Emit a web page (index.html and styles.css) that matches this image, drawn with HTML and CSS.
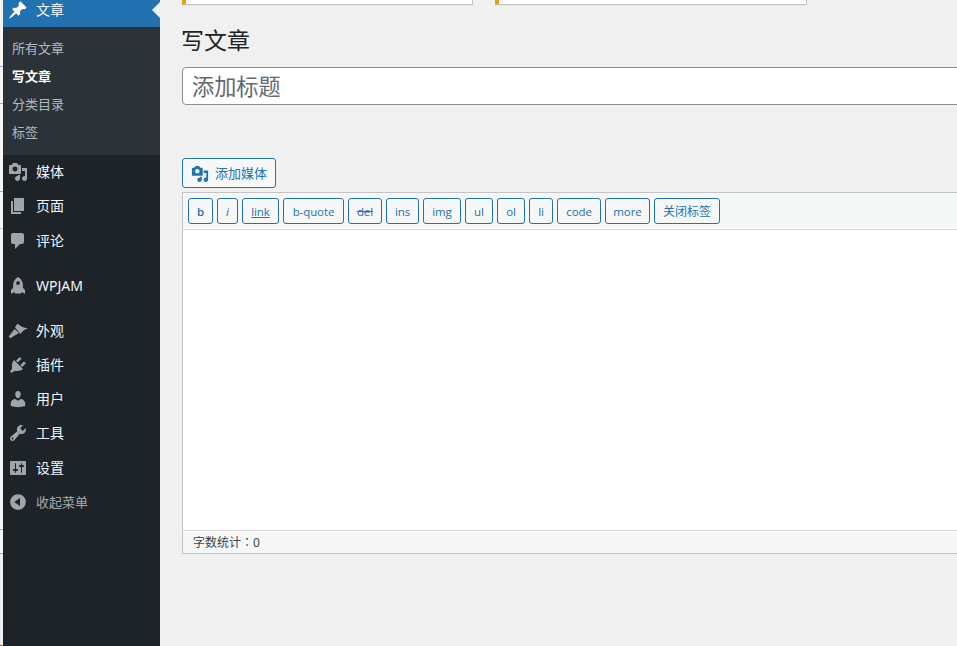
FILE: index.html
```html
<!DOCTYPE html>
<html lang="zh-CN">
<head>
<meta charset="utf-8">
<title>写文章</title>
<link rel="stylesheet" href="styles.css">
</head>
<body>
<div class="sliver">
  <div class="seg seg-a"></div>
  <div class="seg seg-b"></div>
  <div class="seg seg-c"></div>
  <div class="seg seg-d"></div>
  <div class="seg seg-e"></div>
  <div class="seg seg-f"></div>
  <div class="seg seg-g"></div>
  <div class="seg seg-h"></div>
</div>
<nav class="sidebar">
  <a class="item current">
    <svg class="ico" viewBox="0 0 20 20"><path d="M10.44 3.02l1.82-1.82 6.36 6.35-1.83 1.82c-1.05-.68-2.48-.57-3.41.36l-.75.75c-.92.93-1.04 2.35-.35 3.41l-1.83 1.82-2.41-2.41-2.8 2.79c-.42.42-3.38 2.71-3.8 2.29s1.86-3.39 2.28-3.81l2.79-2.79L4.1 9.36l1.83-1.82c1.05.69 2.48.57 3.4-.36l.75-.75c.93-.92 1.05-2.35.36-3.41z"/></svg>
    <span>文章</span>
    <i class="arrow"></i>
  </a>
  <ul class="submenu">
    <li>所有文章</li>
    <li class="on">写文章</li>
    <li>分类目录</li>
    <li>标签</li>
  </ul>
  <a class="item">
    <svg class="ico" viewBox="0 0 20 20"><path d="M13 11V4c0-.55-.45-1-1-1h-1.67L9 1H5L3.67 3H2c-.55 0-1 .45-1 1v7c0 .55.45 1 1 1h10c.55 0 1-.45 1-1zM7 4.5c1.38 0 2.5 1.12 2.5 2.5S8.38 9.5 7 9.5 4.5 8.38 4.5 7 5.62 4.5 7 4.5zM14 6h5v10.5c0 1.38-1.12 2.5-2.5 2.5S14 17.88 14 16.5s1.12-2.5 2.5-2.5c.17 0 .34.02.5.05V9h-3V6zm-4 8.05V13h2v3.5c0 1.38-1.12 2.5-2.5 2.5S7 17.88 7 16.5 8.12 14 9.5 14c.17 0 .34.02.5.05z"/></svg>
    <span>媒体</span>
  </a>
  <a class="item tall">
    <svg class="ico" viewBox="0 0 20 20"><path d="M6 15V2h10v13H6zm-1 1h8v2H3V5h2v11z"/></svg>
    <span>页面</span>
  </a>
  <a class="item">
    <svg class="ico" viewBox="0 0 20 20"><path d="M5 2h9c1.1 0 2 .9 2 2v7c0 1.1-.9 2-2 2h-2l-5 5v-5H5c-1.1 0-2-.9-2-2V4c0-1.1.9-2 2-2z"/></svg>
    <span>评论</span>
  </a>
  <a class="item spaced">
    <svg class="ico" viewBox="0 0 20 20"><path fill-rule="evenodd" d="M10 1c3 1.8 5 4.8 5 8.2 0 .8-.1 1.5-.3 2.2l2.3 2.6V18l-3.2-2-.8 1.5H7L6.2 16 3 18v-4l2.3-2.6c-.2-.7-.3-1.4-.3-2.2C5 5.8 7 2.8 10 1zM10 5.2a1.9 1.9 0 100 3.8 1.9 1.9 0 000-3.8z"/></svg>
    <span>WPJAM</span>
  </a>
  <a class="item spaced">
    <svg class="ico" viewBox="0 0 20 20"><path d="M7 6.5l2.5-4C12 5 15.5 7 20 7.3c-3.5 1.2-6 3.2-7.5 5.7z"/><path d="M6.5 8l4.5 4-8.8 5.2-1.5-1.6z"/></svg>
    <span>外观</span>
  </a>
  <a class="item">
    <svg class="ico" viewBox="0 0 20 20"><path d="M13.11 4.36L9.87 7.6 8 5.73l3.24-3.24c.35-.34 1.05-.2 1.56.32.52.51.66 1.21.31 1.55zm-8 1.77l.91-1.12 9.01 9.01-1.19.84c-.71.71-2.63 1.16-3.82 1.16H6.14L4.9 17.26c-.59.59-1.54.59-2.12 0-.59-.58-.59-1.53 0-2.12l1.24-1.24v-3.88c0-1.13.4-3.19 1.09-3.89zm7.26 3.97l3.24-3.24c.34-.35 1.04-.21 1.55.31.52.51.66 1.21.31 1.55l-3.24 3.25z"/></svg>
    <span>插件</span>
  </a>
  <a class="item">
    <svg class="ico" viewBox="0 0 20 20"><path d="M10 9.25c-2.27 0-2.73-3.44-2.73-3.44C7 4.02 7.82 2 9.97 2c2.16 0 2.98 2.02 2.71 3.81 0 0-.41 3.44-2.68 3.44zm0 2.57L12.72 10c2.39 0 4.52 2.33 4.52 4.53v2.49s-3.65 1.13-7.24 1.13c-3.65 0-7.24-1.13-7.24-1.13v-2.49c0-2.25 1.94-4.48 4.47-4.48z"/></svg>
    <span>用户</span>
  </a>
  <a class="item tall">
    <svg class="ico" viewBox="0 0 20 20"><path d="M16.68 9.77c-1.34 1.34-3.3 1.67-4.95.99l-5.41 6.52c-.99.99-2.59.99-3.58 0s-.99-2.59 0-3.57l6.52-5.42c-.68-1.65-.35-3.61.99-4.95 1.28-1.28 3.12-1.62 4.72-1.06l-2.89 2.89 2.82 2.82 2.86-2.87c.53 1.58.18 3.39-1.08 4.65zM3.81 16.21c.4.39 1.04.39 1.43 0 .4-.4.4-1.04 0-1.43-.39-.4-1.03-.4-1.43 0-.39.39-.39 1.03 0 1.43z"/></svg>
    <span>工具</span>
  </a>
  <a class="item">
    <svg class="ico" viewBox="0 0 20 20"><path d="M18 16V4c0-.55-.45-1-1-1H3c-.55 0-1 .45-1 1v12c0 .55.45 1 1 1h14c.55 0 1-.45 1-1zM8 11h1c.55 0 1 .45 1 1s-.45 1-1 1H8v1.5c0 .28-.22.5-.5.5s-.5-.22-.5-.5V13H6c-.55 0-1-.45-1-1s.45-1 1-1h1V5.5c0-.28.22-.5.5-.5s.5.22.5.5V11zm5-2h-1c-.55 0-1-.45-1-1s.45-1 1-1h1V5.5c0-.28.22-.5.5-.5s.5.22.5.5V7h1c.55 0 1 .45 1 1s-.45 1-1 1h-1v5.5c0 .28-.22.5-.5.5s-.5-.22-.5-.5V9z"/></svg>
    <span>设置</span>
  </a>
  <a class="item collapse">
    <svg class="ico" viewBox="0 0 20 20"><path d="M10 2.16c4.33 0 7.84 3.51 7.84 7.84s-3.51 7.84-7.84 7.84S2.16 14.33 2.16 10 5.71 2.16 10 2.16zm2 11.72V6.12L6.18 9.97z"/></svg>
    <span>收起菜单</span>
  </a>
</nav>
<main class="content">
  <div class="notices">
    <div class="notice notice-one"></div>
    <div class="notice notice-two"></div>
  </div>
  <h1 class="title">写文章</h1>
  <div class="title-input">添加标题</div>
  <button class="media-btn">
    <svg class="media-ico" viewBox="0 0 20 20"><path d="M13 11V4c0-.55-.45-1-1-1h-1.67L9 1H5L3.67 3H2c-.55 0-1 .45-1 1v7c0 .55.45 1 1 1h10c.55 0 1-.45 1-1zM7 4.5c1.38 0 2.5 1.12 2.5 2.5S8.38 9.5 7 9.5 4.5 8.38 4.5 7 5.62 4.5 7 4.5zM14 6h5v10.5c0 1.38-1.12 2.5-2.5 2.5S14 17.88 14 16.5s1.12-2.5 2.5-2.5c.17 0 .34.02.5.05V9h-3V6zm-4 8.05V13h2v3.5c0 1.38-1.12 2.5-2.5 2.5S7 17.88 7 16.5 8.12 14 9.5 14c.17 0 .34.02.5.05z"/></svg>
    <span class="media-label">添加媒体</span>
  </button>
  <section class="editor">
    <div class="toolbar">
      <button class="tag tag-b">b</button>
      <button class="tag tag-i">i</button>
      <button class="tag tag-link">link</button>
      <button class="tag tag-quote">b-quote</button>
      <button class="tag tag-del">del</button>
      <button class="tag tag-ins">ins</button>
      <button class="tag tag-img">img</button>
      <button class="tag tag-ul">ul</button>
      <button class="tag tag-ol">ol</button>
      <button class="tag tag-li">li</button>
      <button class="tag tag-code">code</button>
      <button class="tag tag-more">more</button>
      <button class="tag tag-close">关闭标签</button>
    </div>
    <div class="textarea"></div>
    <div class="status">字数统计<span class="colon" lang="zh-TW">：</span>0</div>
  </section>
</main>
</body>
</html>
```
FILE: styles.css
```css
* { box-sizing: border-box; }
html, body { height: 100%; }
body {
  margin: 0;
  display: flex;
  height: 646px;
  overflow: hidden;
  background: #f0f0f1;
  font-family: "Noto Sans", "Noto Sans CJK SC", sans-serif;
  font-size: 13px;
  color: #3c434a;
}
.sliver { width: 3px; flex: none; display: flex; flex-direction: column; background: #f6f6f6; }
.seg { flex: none; border-bottom: 1px solid #a7aaad; }
.seg-a { height: 67px; }
.seg-b { height: 37px; }
.seg-c { height: 88px; }
.seg-d { height: 37px; border-bottom-color: #c3c4c7; }
.seg-e { height: 301px; }
.seg-f { height: 24px; }
.seg-g { flex: 1; border: 0; background: #f0f0f1; }
.seg-h {
  height: 1px;
  border: 0;
  background: linear-gradient(90deg, #d63638 0 1px, #2271b1 1px 2px, #dba617 2px 3px);
}
.sidebar {
  width: 157px;
  flex: none;
  background: #1d2327;
  display: flex;
  flex-direction: column;
}
.item {
  display: flex;
  align-items: center;
  height: 34px;
  padding-left: 5px;
  color: #f0f6fc;
  font-size: 14px;
  position: relative;
}
.tall { height: 35px; padding-bottom: 1px; }
.item span { margin: -2px 0 0 8px; }
.ico { width: 20px; height: 20px; flex: none; fill: #a0a5aa; }
.current {
  height: 27px;
  background: #2271b1;
  color: #fff;
  padding-bottom: 8px;
}
.current .ico { fill: #fff; }
.arrow {
  position: absolute;
  right: 0;
  top: 2px;
  border: 8px solid transparent;
  border-right-color: #f0f0f1;
  border-left-width: 0;
}
.spaced { margin-top: 11px; }
.collapse { color: #a7aaad; font-size: 13px; }
.submenu {
  list-style: none;
  margin: 0;
  padding: 7px 0 9px;
  background: #2c3338;
  color: rgba(240, 246, 252, .7);
}
.submenu li { height: 28px; line-height: 28px; padding-left: 9px; }
.submenu .on { color: #fff; font-weight: 600; }
.content { flex: 1; min-width: 0; padding-left: 22px; overflow: hidden; }
.notices { display: flex; gap: 22px; height: 5px; }
.notice {
  background: #fff;
  border-left: 4px solid #dba617;
  border-bottom: 1px solid #c3c4c7;
  border-right: 1px solid #c3c4c7;
  box-shadow: 0 1px 1px rgba(0, 0, 0, .04);
}
.notice-one { width: 291px; }
.notice-two { width: 312px; }
.title {
  margin: 20px 0 0 -1px;
  height: 30px;
  line-height: 30px;
  font-size: 23px;
  font-weight: 400;
  color: #1d2327;
}
.title-input {
  width: 900px;
  height: 38px;
  margin-top: 12px;
  padding-left: 9px;
  line-height: 38px;
  font-size: 22.2px;
  color: #646970;
  background: #fff;
  border: 1px solid #8c8f94;
  border-radius: 4px;
}
.media-btn {
  display: flex;
  align-items: center;
  width: 94px;
  height: 30px;
  margin-top: 53px;
  padding: 0 0 0 8px;
  background: #f6f7f7;
  border: 1px solid #2271b1;
  border-radius: 3px;
  color: #2271b1;
  font: inherit;
}
.media-ico { width: 18px; height: 18px; margin: 1px 6px 0 0; fill: #2271b1; flex: none; }
.media-label { margin-top: -2px; }
.editor {
  width: 900px;
  margin-top: 4px;
  border: 1px solid #c3c4c7;
  background: #fff;
}
.toolbar {
  display: flex;
  gap: 4px;
  height: 37px;
  padding: 5px 0 0 5px;
  background: #f6f7f7;
  border-bottom: 1px solid #dcdcde;
}
.tag {
  flex: none;
  height: 26px;
  padding: 0;
  background: #f6f7f7;
  border: 1px solid #2271b1;
  border-radius: 3px;
  color: #2271b1;
  font-family: "Open Sans", "Noto Sans CJK SC", sans-serif;
  font-size: 11.5px;
  letter-spacing: -.1px;
}
.tag-b { width: 25px; font-weight: 600; }
.tag-i { width: 21px; font-style: italic; }
.tag-link { width: 37px; text-decoration: underline; }
.tag-quote { width: 61px; }
.tag-del { width: 34px; text-decoration: line-through; }
.tag-ins { width: 33px; }
.tag-img { width: 38px; }
.tag-ul, .tag-ol { width: 28px; }
.tag-li { width: 24px; }
.tag-code { width: 44px; }
.tag-more { width: 45px; }
.tag-close { width: 66px; font-size: 12px; letter-spacing: 0; }
.textarea { height: 300px; background: #fff; }
.status {
  height: 23px;
  line-height: 22px;
  padding-left: 10px;
  font-size: 12px;
  color: #3c434a;
  background: #f6f7f7;
  border-top: 1px solid #dcdcde;
}
.colon { font-family: "Noto Sans CJK TC", sans-serif; }
```
